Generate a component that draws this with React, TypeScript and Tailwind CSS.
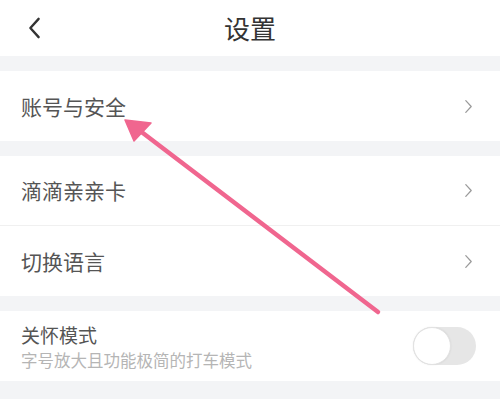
const FONT = '"Noto Sans CJK SC", "Noto Sans", sans-serif';

function ChevronRight() {
  return (
    <svg viewBox="0 0 10 16" className="h-[15px] w-[9px]" fill="none" stroke="#9a9a9a" strokeWidth="1.4" strokeLinecap="round" strokeLinejoin="round">
      <path d="M2 1.5l6 6.5-6 6.5" />
    </svg>
  );
}

function Row({ label, divider }: { label: string; divider?: boolean }) {
  return (
    <div className={`flex h-[70px] items-center justify-between bg-white pl-[21px] pr-[27px] ${divider ? "border-b border-[#f0f0f0]" : ""}`}>
      <span className="text-[21px] leading-none text-[#555]">{label}</span>
      <ChevronRight />
    </div>
  );
}

export default function App() {
  return (
    <div className="relative h-[399px] w-[500px] overflow-hidden bg-[#f3f4f6]" style={{ fontFamily: FONT }}>
      <header className="relative flex h-14 items-center justify-center bg-white">
        <button className="absolute left-[24px] top-[13px] p-1" aria-label="返回">
          <svg viewBox="0 0 14 24" className="h-[22px] w-[13px]" fill="none" stroke="#333" strokeWidth="2.6" strokeLinecap="round" strokeLinejoin="round">
            <path d="M11.5 2L2.5 12l9 10" />
          </svg>
        </button>
        <h1 className="text-[26px] leading-none text-[#333]">设置</h1>
      </header>

      <div className="mt-[15px]">
        <Row label="账号与安全" />
      </div>

      <div className="mt-[15px]">
        <Row label="滴滴亲亲卡" divider />
        <Row label="切换语言" />
      </div>

      <div className="mt-[15px] flex h-[70px] items-center justify-between bg-white pl-[21px] pr-[24px]">
        <div className="flex flex-col">
          <span className="text-[19px] leading-[27px] text-[#555]">关怀模式</span>
          <span className="text-[16.5px] leading-[24px] text-[#b5b5b5]">字号放大且功能极简的打车模式</span>
        </div>
        <div className="flex h-[38px] w-[63px] items-center rounded-full bg-[#e6e6e6]">
          <div className="h-[38px] w-[38px] rounded-full border border-[#e2e2e2] bg-white shadow-[0_0_2px_rgba(0,0,0,0.08)]" />
        </div>
      </div>

      <svg className="pointer-events-none absolute inset-0 h-full w-full" viewBox="0 0 500 399">
        <path d="M135 127L378 312" stroke="#f0668f" strokeWidth="4.5" strokeLinecap="round" />
        <path d="M125 120L151 123L134 141Z" fill="#f0668f" stroke="#f0668f" strokeWidth="1.5" strokeLinejoin="round" />
      </svg>
    </div>
  );
}
